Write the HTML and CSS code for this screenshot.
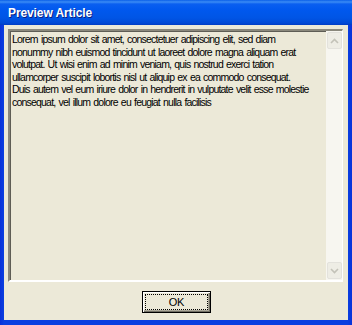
FILE: index.html
```html
<!DOCTYPE html>
<html>
<head>
<meta charset="utf-8">
<link rel="stylesheet" href="styles.css">
</head>
<body>
<div class="window">
  <div class="titlebar"><span class="title">Preview Article</span></div>
  <div class="client">
    <div class="textbox">
      <div class="text">Lorem ipsum dolor sit amet, consectetuer adipiscing elit, sed diam<br>nonummy nibh euismod tincidunt ut laoreet dolore magna aliquam erat<br>volutpat. Ut wisi enim ad minim veniam, quis nostrud exerci tation<br>ullamcorper suscipit lobortis nisl ut aliquip ex ea commodo consequat.<br>Duis autem vel eum iriure dolor in hendrerit in vulputate velit esse molestie<br>consequat, vel illum dolore eu feugiat nulla facilisis</div>
      <div class="scrollbar">
        <div class="arrow">
          <svg width="9" height="6" viewBox="0 0 9 6"><path d="M1 5 L4.5 1.5 L8 5" fill="none" stroke="#c3c2b8" stroke-width="1.6"/></svg>
        </div>
        <div class="track"></div>
        <div class="arrow">
          <svg width="9" height="6" viewBox="0 0 9 6"><path d="M1 1 L4.5 4.5 L8 1" fill="none" stroke="#c3c2b8" stroke-width="1.6"/></svg>
        </div>
      </div>
    </div>
    <div class="buttons">
      <button class="btn"><span class="focus">OK</span></button>
    </div>
  </div>
</div>
</body>
</html>
```
FILE: styles.css
```css
html, body {
  margin: 0;
  padding: 0;
  background: #ece9d8;
}
.window {
  width: 352px;
  height: 325px;
  display: flex;
  flex-direction: column;
  background: linear-gradient(to right, #0831d9 0, #0a3fe0 4px, #0a3fe0 348px, #0831d9 352px);
  font-family: "Liberation Sans", Arial, sans-serif;
}
.titlebar {
  height: 25px;
  flex: none;
  display: flex;
  align-items: center;
  padding-left: 8px;
  background: linear-gradient(to bottom, #0a5fe8 0, #3b8cf5 2px, #0a5ff0 4px, #0058ee 10px, #0055e5 18px, #0049d6 23px, #003cc4 25px);
}
.title {
  color: #fff;
  font-weight: bold;
  font-size: 12px;
  letter-spacing: -0.1px;
  text-shadow: 1px 1px 0 #0a1e80;
}
.client {
  flex: 1;
  margin: 0 4px 5px 4px;
  background: #ece9d8;
  display: flex;
  flex-direction: column;
  padding: 4px 5px 0 4px;
}
.textbox {
  height: 249px;
  border-top: 2px solid #8a887c;
  border-left: 2px solid #8a887c;
  border-right: 1px solid #fff;
  border-bottom: 2px solid #fff;
  background: #ece9d8;
  display: flex;
  box-shadow: inset 1px 1px 0 #5e5d55;
}
.text {
  flex: 1;
  padding: 2px 0 0 2px;
  font-size: 10.5px;
  line-height: 12.6px;
  letter-spacing: -0.8px;
  word-spacing: 1px;
  color: #000;
  white-space: nowrap;
  overflow: hidden;
}
.scrollbar {
  width: 16px;
  display: flex;
  flex-direction: column;
  background: #f7f6f0;
  padding: 1px 0 1px 0;
}
.track {
  flex: 1;
}
.arrow {
  height: 15px;
  margin: 0 0 0 1px;
  border: 1px solid #e3e2dc;
  border-radius: 2px;
  background: #eeede5;
  display: flex;
  align-items: center;
  justify-content: center;
}
.buttons {
  display: flex;
  justify-content: center;
  padding-top: 9px;
  padding-left: 2px;
}
.btn {
  width: 69px;
  height: 22px;
  padding: 2px;
  margin: 0;
  border: 1px solid #000;
  background: #ece9d8;
  box-shadow: inset 1px 1px 0 #fff, inset -1px -1px 0 #716f64, inset -2px -2px 0 #aca899;
  font-family: "Liberation Sans", Arial, sans-serif;
  font-size: 11px;
  color: #000;
  display: flex;
}
.focus {
  flex: 1;
  border: 1px dotted #000;
  display: flex;
  align-items: center;
  justify-content: center;
  letter-spacing: -0.3px;
}
```
